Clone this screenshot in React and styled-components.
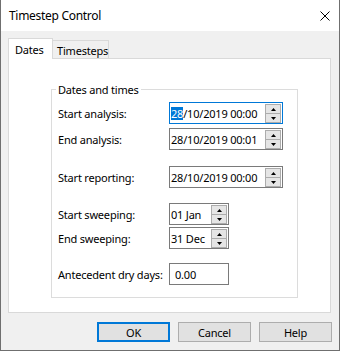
import React from "react";
import styled, { createGlobalStyle } from "styled-components";

const FONT = `"Segoe UI", "Noto Sans", "DejaVu Sans", sans-serif`;

const GlobalStyle = createGlobalStyle`
  html, body { margin: 0; padding: 0; background: #f0f0f0; }
  body { font-family: ${FONT}; font-size: 11px; color: #000; letter-spacing: -0.2px; }
  * { box-sizing: border-box; }
`;

const Window = styled.div`
  width: 340px;
  height: 351px;
  display: flex;
  flex-direction: column;
  background: #f0f0f0;
  border: 1px solid #6f6f6f;
  border-top: none;
`;

const TitleBar = styled.div`
  height: 31px;
  flex: none;
  background: #fff;
  display: flex;
  align-items: center;
  justify-content: space-between;
  padding: 0 9px 0 8px;
`;

const Title = styled.div`
  font-size: 12px;
  letter-spacing: -0.3px;
  color: #000;
`;

const CloseIcon = styled.svg`
  width: 10px;
  height: 10px;
  display: block;
`;

const Body = styled.div`
  flex: 1;
  display: flex;
  flex-direction: column;
  padding: 7px 8px 8px 7px;
  min-height: 0;
`;

const Tabs = styled.div`
  display: flex;
  align-items: flex-end;
  height: 20px;
  flex: none;
`;

const Tab = styled.div`
  position: relative;
  width: ${(p) => p.$w}px;
  height: ${(p) => (p.$active ? 21 : 18)}px;
  margin-bottom: ${(p) => (p.$active ? -1 : 0)}px;
  margin-left: ${(p) => (p.$active ? 0 : -1)}px;
  z-index: ${(p) => (p.$active ? 2 : 1)};
  background: ${(p) => (p.$active ? "#fff" : "#f0f0f0")};
  border: 1px solid #d9d9d9;
  border-bottom: none;
  display: flex;
  align-items: center;
  padding-left: ${(p) => (p.$active ? 6 : 4)}px;
  padding-top: ${(p) => (p.$active ? 0 : 1)}px;
  font-size: 11px;
`;

const Panel = styled.div`
  flex: 1;
  background: #fff;
  border: 1px solid #d9d9d9;
  min-height: 0;
`;

const Group = styled.fieldset`
  width: 247px;
  margin: 23px 0 0 42px;
  padding: 5px 0 12px 6px;
  border: 1px solid #dcdcdc;
  min-width: 0;
`;

const Legend = styled.legend`
  padding: 0 2px;
  margin-left: -2px;
  line-height: 15px;
  font-size: 11px;
`;

const Row = styled.div`
  display: grid;
  grid-template-columns: 111px auto;
  align-items: center;
  justify-items: start;
  margin-top: ${(p) => p.$gap || 0}px;
`;

const Label = styled.span`
  font-size: 11px;
  white-space: nowrap;
`;

const Field = styled.div`
  width: ${(p) => p.$w}px;
  height: 22px;
  background: #fff;
  border: 1px solid ${(p) => (p.$focus ? "#0078d7" : "#7a7a7a")};
  display: flex;
  align-items: center;
  padding: 0 1px 0 ${(p) => p.$pad ?? 1}px;
  font-size: 11px;
  white-space: nowrap;
`;

const FieldText = styled.span`
  flex: 1;
  line-height: 13px;
`;

const Sel = styled.span`
  background: #0078d7;
  color: #fff;
  display: inline-block;
  line-height: 13px;
`;

const Spin = styled.div`
  width: 16px;
  height: 19px;
  display: flex;
  flex-direction: column;
  align-self: flex-start;
  margin-top: 1px;
`;

const SpinBtn = styled.div`
  height: 10px;
  margin-top: ${(p) => (p.$down ? -1 : 0)}px;
  background: #e5e5e5;
  border: 1px solid #acacac;
  display: flex;
  align-items: center;
  justify-content: center;
`;

const Arrow = ({ down }) => (
  <svg width="5" height="3" viewBox="0 0 5 3" style={{ display: "block" }}>
    <polygon points={down ? "0,0 5,0 2.5,3" : "0,3 5,3 2.5,0"} fill="#000" />
  </svg>
);

const Spinner = () => (
  <Spin>
    <SpinBtn>
      <Arrow />
    </SpinBtn>
    <SpinBtn $down>
      <Arrow down />
    </SpinBtn>
  </Spin>
);

const Buttons = styled.div`
  display: flex;
  justify-content: flex-end;
  gap: 8px;
  margin-top: 9px;
  margin-right: -1px;
  flex: none;
`;

const Button = styled.div`
  width: 73px;
  height: 20px;
  background: #e1e1e1;
  border: ${(p) => (p.$default ? "2px solid #0078d7" : "1px solid #adadad")};
  display: flex;
  align-items: center;
  justify-content: center;
  font-size: 11px;
`;

export default function App() {
  return (
    <>
      <GlobalStyle />
      <Window>
        <TitleBar>
          <Title>Timestep Control</Title>
          <CloseIcon viewBox="0 0 10 10">
            <path d="M0.5 0.5 L9.5 9.5 M9.5 0.5 L0.5 9.5" stroke="#000" strokeWidth="1" fill="none" />
          </CloseIcon>
        </TitleBar>
        <Body>
          <Tabs>
            <Tab $active $w={45}>Dates</Tab>
            <Tab $w={57}>Timesteps</Tab>
          </Tabs>
          <Panel>
            <Group>
              <Legend>Dates and times</Legend>
              <Row>
                <Label>Start analysis:</Label>
                <Field $w={114} $focus>
                  <FieldText>
                    <Sel>28</Sel>/10/2019 00:00
                  </FieldText>
                  <Spinner />
                </Field>
              </Row>
              <Row $gap={4}>
                <Label>End analysis:</Label>
                <Field $w={114}>
                  <FieldText>28/10/2019 00:01</FieldText>
                  <Spinner />
                </Field>
              </Row>
              <Row $gap={16}>
                <Label>Start reporting:</Label>
                <Field $w={114}>
                  <FieldText>28/10/2019 00:00</FieldText>
                  <Spinner />
                </Field>
              </Row>
              <Row $gap={15}>
                <Label>Start sweeping:</Label>
                <Field $w={60}>
                  <FieldText>01 Jan</FieldText>
                  <Spinner />
                </Field>
              </Row>
              <Row $gap={2}>
                <Label>End sweeping:</Label>
                <Field $w={60}>
                  <FieldText>31 Dec</FieldText>
                  <Spinner />
                </Field>
              </Row>
              <Row $gap={14}>
                <Label>Antecedent dry days:</Label>
                <Field $w={60} $pad={5}>
                  <FieldText>0.00</FieldText>
                </Field>
              </Row>
            </Group>
          </Panel>
          <Buttons>
            <Button $default>OK</Button>
            <Button>Cancel</Button>
            <Button>Help</Button>
          </Buttons>
        </Body>
      </Window>
    </>
  );
}
